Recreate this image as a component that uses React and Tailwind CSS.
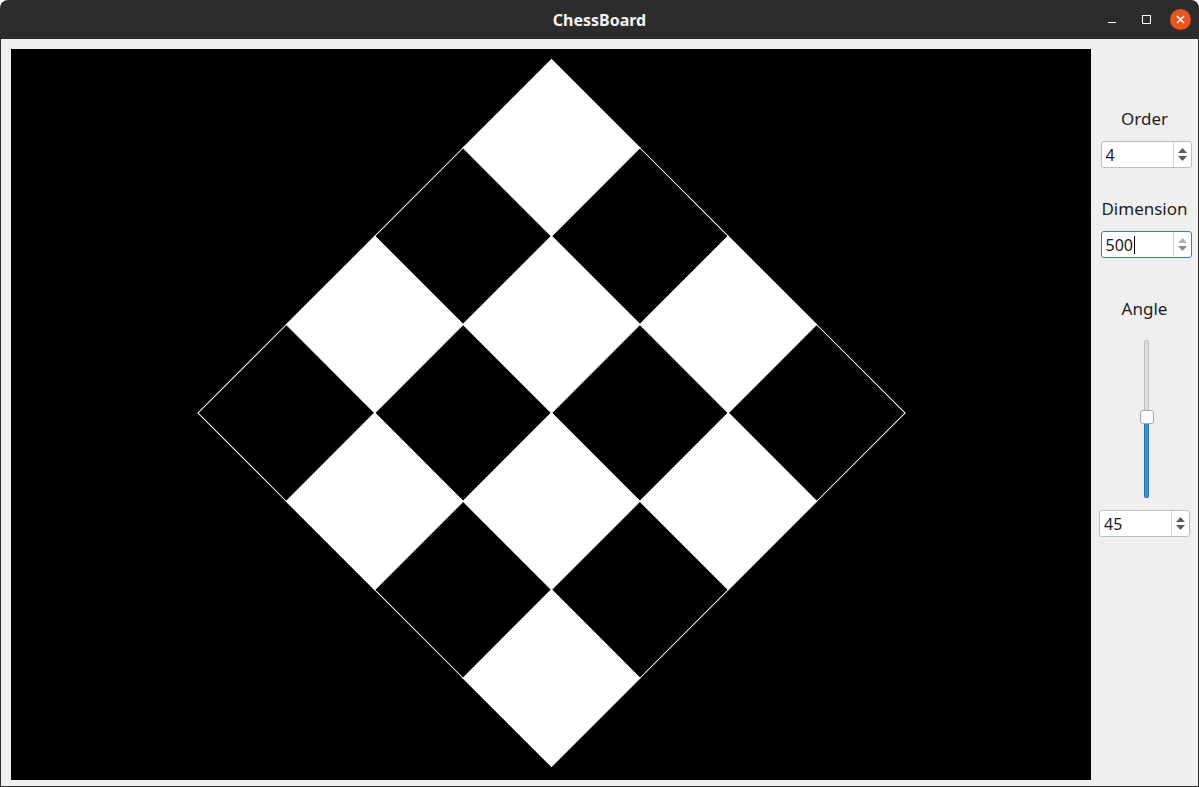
import React from 'react';

const ORDER = 4;
const DIM = 500;

// --- board drawing ---
const Board = () => {
  const size = DIM / ORDER;
  const squares = [];
  for (let r = 0; r < ORDER; r++) {
    for (let c = 0; c < ORDER; c++) {
      squares.push(
        <rect
          key={`${r}-${c}`}
          x={-DIM / 2 + c * size}
          y={-DIM / 2 + r * size}
          width={size}
          height={size}
          fill={(r + c) % 2 === 0 ? '#ffffff' : '#000000'}
          stroke="#ffffff"
          strokeWidth={1}
        />
      );
    }
  }
  return (
    <svg width="1080" height="731" viewBox="0 0 1080 731" className="block">
      <rect width="1080" height="731" fill="#000" />
      <g transform="translate(540.5 364) rotate(45)">{squares}</g>
    </svg>
  );
};

const SpinBox = ({ value, focused, className = '' }) => (
  <div
    className={`flex h-[27px] w-[91px] rounded-[3px] border bg-white ${
      focused ? 'border-[#3a7ac0]' : 'border-[#bdbdbd]'
    } ${className}`}
  >
    <div className="flex flex-1 items-center pl-[4px] text-[16px] text-[#1a1a1a]">
      {value}
      {focused && <span className="ml-[1px] h-[18px] w-[1px] bg-black" />}
    </div>
    <div className="flex w-[18px] flex-col items-center justify-center gap-[3px] border-l border-[#d6d6d6]">
      <svg width="9" height="5" viewBox="0 0 9 5">
        <path d="M0 5 L4.5 0 L9 5 Z" fill={focused ? '#b0b0b0' : '#5c5c5c'} />
      </svg>
      <svg width="9" height="5" viewBox="0 0 9 5">
        <path d="M0 0 L4.5 5 L9 0 Z" fill={focused ? '#8a8a8a' : '#5c5c5c'} />
      </svg>
    </div>
  </div>
);

const Slider = () => (
  <div className="relative ml-[4px] mt-[20px] flex h-[158px] w-[14px] justify-center">
    <div className="flex h-full w-[5px] flex-col overflow-hidden rounded-[3px]">
      <div className="h-[76px] border border-[#bcbcbc] bg-[#dcdcdc]" />
      <div className="flex-1 border border-[#2a6fb0] bg-[#3c92dc]" />
    </div>
    <div className="absolute left-0 top-[70px] h-[14px] w-[14px] rounded-[3px] border border-[#a8a8a8] bg-[#fbfbfb]" />
  </div>
);

export default function App() {
  return (
    <div
      className="flex h-[787px] w-[1199px] flex-col overflow-hidden rounded-t-[8px] bg-[#2c2c2c]"
      style={{ fontFamily: '"Noto Sans", "Open Sans", sans-serif' }}
    >
      {/* title bar */}
      <div className="relative flex h-[39px] items-center justify-center">
        <span className="text-[16px] font-bold text-[#f2f2f2]">ChessBoard</span>
        <div className="absolute right-[8px] top-0 flex h-full items-center">
          <div className="mr-[26px] mt-[6px] h-[1.5px] w-[8px] bg-white" />
          <div className="mr-[19px] h-[9px] w-[9px] border border-white" />
          <div className="flex h-[21px] w-[21px] items-center justify-center rounded-full bg-[#e95420]">
            <svg width="9" height="9" viewBox="0 0 9 9">
              <path d="M1 1 L8 8 M8 1 L1 8" stroke="#fff" strokeWidth="1.6" />
            </svg>
          </div>
        </div>
      </div>

      {/* content */}
      <div className="mx-[1px] mb-[1px] flex flex-1 bg-[#efefef]">
        <div className="ml-[10px] mt-[10px]">
          <Board />
        </div>
        <div className="flex flex-1 flex-col items-center text-[17px] text-[#1e1e1e]">
          <div className="mt-[69px] leading-[22px]">Order</div>
          <SpinBox value="4" className="ml-[3px] mt-[11px]" />
          <div className="mt-[30px] leading-[22px]">Dimension</div>
          <SpinBox value="500" focused className="ml-[3px] mt-[11px]" />
          <div className="mt-[40px] leading-[22px]">Angle</div>
          <Slider />
          <SpinBox value="45" className="mt-[12px]" />
        </div>
      </div>
    </div>
  );
}
